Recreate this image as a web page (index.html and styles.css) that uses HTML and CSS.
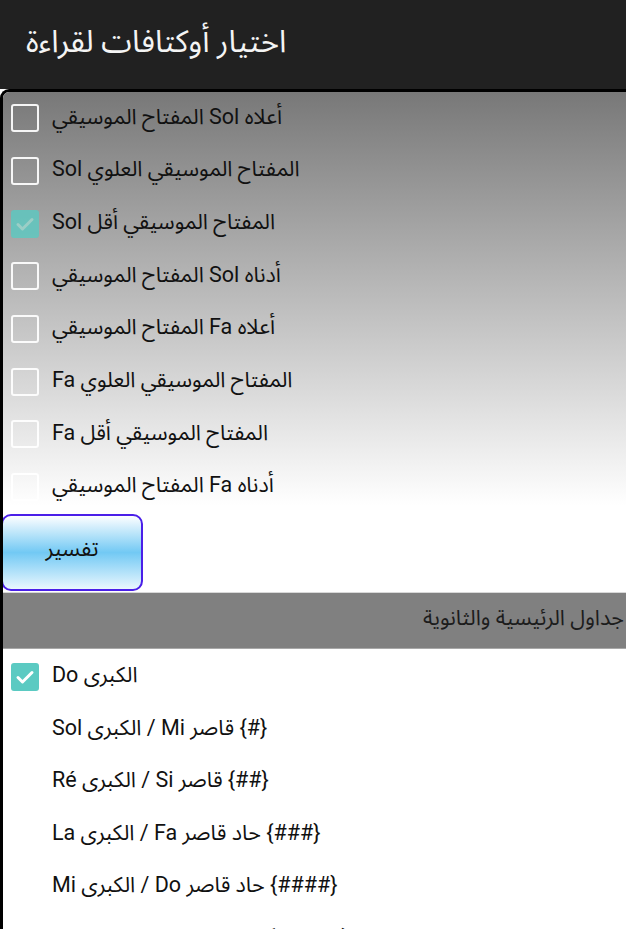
FILE: index.html
```html
<!DOCTYPE html>
<html lang="ar">

<head>
  <meta charset="UTF-8">
  <meta name="viewport" content="width=device-width, initial-scale=1.0">
  <title>اختيار أوكتافات لقراءة</title>
  <link rel="stylesheet" href="styles.css">
</head>

<body>
  <header class="app-bar">
    <h1 class="app-title">اختيار أوكتافات لقراءة</h1>
  </header>

  <div class="panel">
    <div class="octaves">
      <div class="option"><span class="box"></span><span class="label">المفتاح الموسيقي Sol أعلاه</span></div>
      <div class="option"><span class="box"></span><span class="label">Sol المفتاح الموسيقي العلوي</span></div>
      <div class="option"><span class="box checked faded"><svg viewBox="0 0 24 24"><path d="M5 12.5l4.5 4.5L19 7.5"/></svg></span><span class="label">Sol المفتاح الموسيقي أقل</span></div>
      <div class="option"><span class="box"></span><span class="label">المفتاح الموسيقي Sol أدناه</span></div>
      <div class="option"><span class="box"></span><span class="label">المفتاح الموسيقي Fa أعلاه</span></div>
      <div class="option"><span class="box"></span><span class="label">Fa المفتاح الموسيقي العلوي</span></div>
      <div class="option"><span class="box"></span><span class="label">Fa المفتاح الموسيقي أقل</span></div>
      <div class="option"><span class="box"></span><span class="label">المفتاح الموسيقي Fa أدناه</span></div>
    </div>

    <button class="btn-explain">تفسير</button>

    <div class="section-title">جداول الرئيسية والثانوية</div>

    <div class="scales">
      <div class="option"><span class="box checked"><svg viewBox="0 0 24 24"><path d="M5 12.5l4.5 4.5L19 7.5"/></svg></span><span class="label">Do الكبرى</span></div>
      <div class="option"><span class="box"></span><span class="label">Sol الكبرى / Mi قاصر {#}</span></div>
      <div class="option"><span class="box"></span><span class="label">Ré الكبرى / Si قاصر {##}</span></div>
      <div class="option"><span class="box"></span><span class="label">La الكبرى / Fa حاد قاصر {###}</span></div>
      <div class="option"><span class="box"></span><span class="label">Mi الكبرى / Do حاد قاصر {####}</span></div>
      <div class="option"><span class="box"></span><span class="label">Si الكبرى / Sol حاد قاصر {#####}</span></div>
    </div>
  </div>
</body>

</html>
```

FILE: styles.css
```css
* {
  margin: 0;
  padding: 0;
  box-sizing: border-box;
}

html,
body {
  height: 929px;
  overflow: hidden;
}

body {
  font-family: Roboto, "Noto Sans Arabic", "DejaVu Sans", sans-serif;
  background: #fff;
  color: #111;
}

.app-bar {
  height: 89px;
  background: #212121;
  display: flex;
  align-items: center;
  padding-left: 26px;
}

.app-title {
  color: #f4f4f4;
  font-size: 31px;
  font-weight: normal;
  margin-top: -6px;
}

.panel {
  width: 680px;
  border-top: 3px solid #000;
  border-left: 3px solid #000;
  border-top-left-radius: 9px;
  overflow: hidden;
}

.octaves {
  background: linear-gradient(#787878, #fff 98%);
}

.option {
  height: 52.7px;
  display: flex;
  align-items: center;
  gap: 13px;
  padding-left: 8px;
}

.scales {
  padding-top: 2px;
}

.scales .option {
  height: 52.5px;
}

.box {
  width: 28px;
  height: 28px;
  flex-shrink: 0;
  border: 2.5px solid rgba(255, 255, 255, 0.92);
  border-radius: 3px;
  display: flex;
  align-items: center;
  justify-content: center;
}

.box.checked {
  background: #5bcac2;
  border-color: #5bcac2;
}

.box.faded {
  opacity: 0.8;
}

.box svg {
  width: 24px;
  height: 24px;
  fill: none;
  stroke: #fff;
  stroke-width: 3;
  stroke-linecap: round;
  stroke-linejoin: round;
}

.box.faded svg {
  stroke: #9ad9cf;
}

.label {
  font-size: 21.5px;
  line-height: 1;
  white-space: nowrap;
  padding-bottom: 4px;
}

.btn-explain {
  display: block;
  width: 142px;
  height: 77px;
  margin-left: -2px;
  border: 2.5px solid #4a1fe8;
  border-radius: 10px;
  background: linear-gradient(#fdfeff 0%, #72c9f4 50%, #eaf7fe 100%);
  font-family: inherit;
  font-size: 22px;
  color: #111;
  padding-bottom: 6px;
}

.section-title {
  margin-top: 1px;
  height: 57px;
  background: #808080;
  border-top: 1px solid #d8d8d8;
  border-bottom: 1px solid #a8a8a8;
  display: flex;
  align-items: center;
  justify-content: flex-end;
  padding-right: 56px;
  font-size: 21.5px;
  color: #1c1c1c;
  padding-bottom: 4px;
}
```
